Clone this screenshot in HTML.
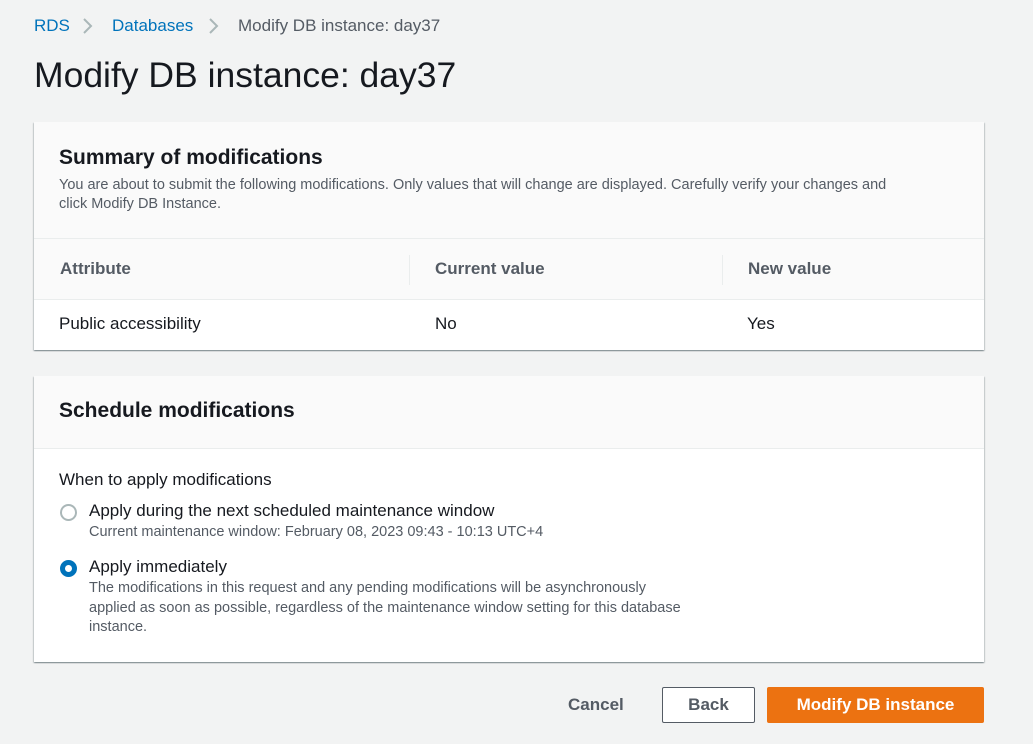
<!DOCTYPE html><html><head><style>
body{margin:0;width:1033px;height:744px;background:#f2f3f3;font-family:"Liberation Sans",sans-serif;position:relative;overflow:hidden;color:#16191f}
.a{position:absolute;white-space:nowrap}
.card{position:absolute;left:34px;width:950px;background:#fff;box-shadow:0 1px 1px 0 rgba(0,28,36,.3),1px 1px 1px 0 rgba(0,28,36,.15),-1px 1px 1px 0 rgba(0,28,36,.15)}
.hd{background:#fafafa;border-bottom:1px solid #eaeded;position:absolute;left:0;right:0;top:0}
.bold{font-weight:bold}
.sub{color:#545b64;font-size:14.5px}
</style></head><body>
<div class="a" style="left:34px;top:16px;font-size:17px;color:#0073bb">RDS</div>
<svg class="a" style="left:82px;top:17px" width="12" height="18"><path d="M2 2l7 7-7 7" stroke="#aab7b8" stroke-width="2" fill="none"/></svg>
<div class="a" style="left:112px;top:16px;font-size:17px;color:#0073bb">Databases</div>
<svg class="a" style="left:208px;top:17px" width="12" height="18"><path d="M2 2l7 7-7 7" stroke="#aab7b8" stroke-width="2" fill="none"/></svg>
<div class="a" style="left:238px;top:16px;font-size:17px;color:#545b64">Modify DB instance: day37</div>
<div class="a" style="left:34px;top:55px;font-size:35.5px">Modify DB instance: day37</div>

<div class="card" style="top:122px;height:228px">
 <div class="hd" style="height:116px"></div>
 <div class="a bold" style="left:25px;top:24px;font-size:21px">Summary of modifications</div>
 <div class="a sub" style="left:25px;top:54px;line-height:19px">You are about to submit the following modifications. Only values that will change are displayed. Carefully verify your changes and<br>click Modify DB Instance.</div>
 <div style="position:absolute;left:0;right:0;top:117px;height:60px;background:#fafafa;border-bottom:1px solid #eaeded"></div>
 <div style="position:absolute;left:375px;top:133px;width:1px;height:30px;background:#eaeded"></div>
 <div style="position:absolute;left:688px;top:133px;width:1px;height:30px;background:#eaeded"></div>
 <div class="a bold" style="left:26px;top:137px;font-size:17px;color:#545b64">Attribute</div>
 <div class="a bold" style="left:401px;top:137px;font-size:17px;color:#545b64">Current value</div>
 <div class="a bold" style="left:714px;top:137px;font-size:17px;color:#545b64">New value</div>
 <div class="a" style="left:25px;top:192px;font-size:17px">Public accessibility</div>
 <div class="a" style="left:401px;top:192px;font-size:17px">No</div>
 <div class="a" style="left:713px;top:192px;font-size:17px">Yes</div>
</div>

<div class="card" style="top:376px;height:286px">
 <div class="hd" style="height:72px"></div>
 <div class="a bold" style="left:25px;top:23px;font-size:21px">Schedule modifications</div>
 <div class="a" style="left:25px;top:94px;font-size:17px">When to apply modifications</div>
 <div style="position:absolute;left:26px;top:128px;width:13px;height:13px;border:2px solid #aab7b8;border-radius:50%"></div>
 <div class="a" style="left:55px;top:125px;font-size:17px">Apply during the next scheduled maintenance window</div>
 <div class="a sub" style="left:55px;top:148px">Current maintenance window: February 08, 2023 09:43 - 10:13 UTC+4</div>
 <div style="position:absolute;left:26px;top:184px;width:7px;height:7px;border:5px solid #0073bb;border-radius:50%;background:#fff"></div>
 <div class="a" style="left:55px;top:181px;font-size:17px">Apply immediately</div>
 <div class="a sub" style="left:55px;top:203px;line-height:19.5px">The modifications in this request and any pending modifications will be asynchronously<br>applied as soon as possible, regardless of the maintenance window setting for this database<br>instance.</div>
</div>

<div class="a bold" style="left:568px;top:695px;font-size:17px;color:#545b64">Cancel</div>
<div class="a bold" style="left:662px;top:687px;width:91px;height:34px;border:1px solid #545b64;background:#fff;border-radius:2px;font-size:17px;color:#545b64;text-align:center;line-height:34px">Back</div>
<div class="a bold" style="left:767px;top:687px;width:217px;height:36px;background:#ec7211;border-radius:2px;font-size:17px;color:#fff;text-align:center;line-height:36px">Modify DB instance</div>
</body></html>
